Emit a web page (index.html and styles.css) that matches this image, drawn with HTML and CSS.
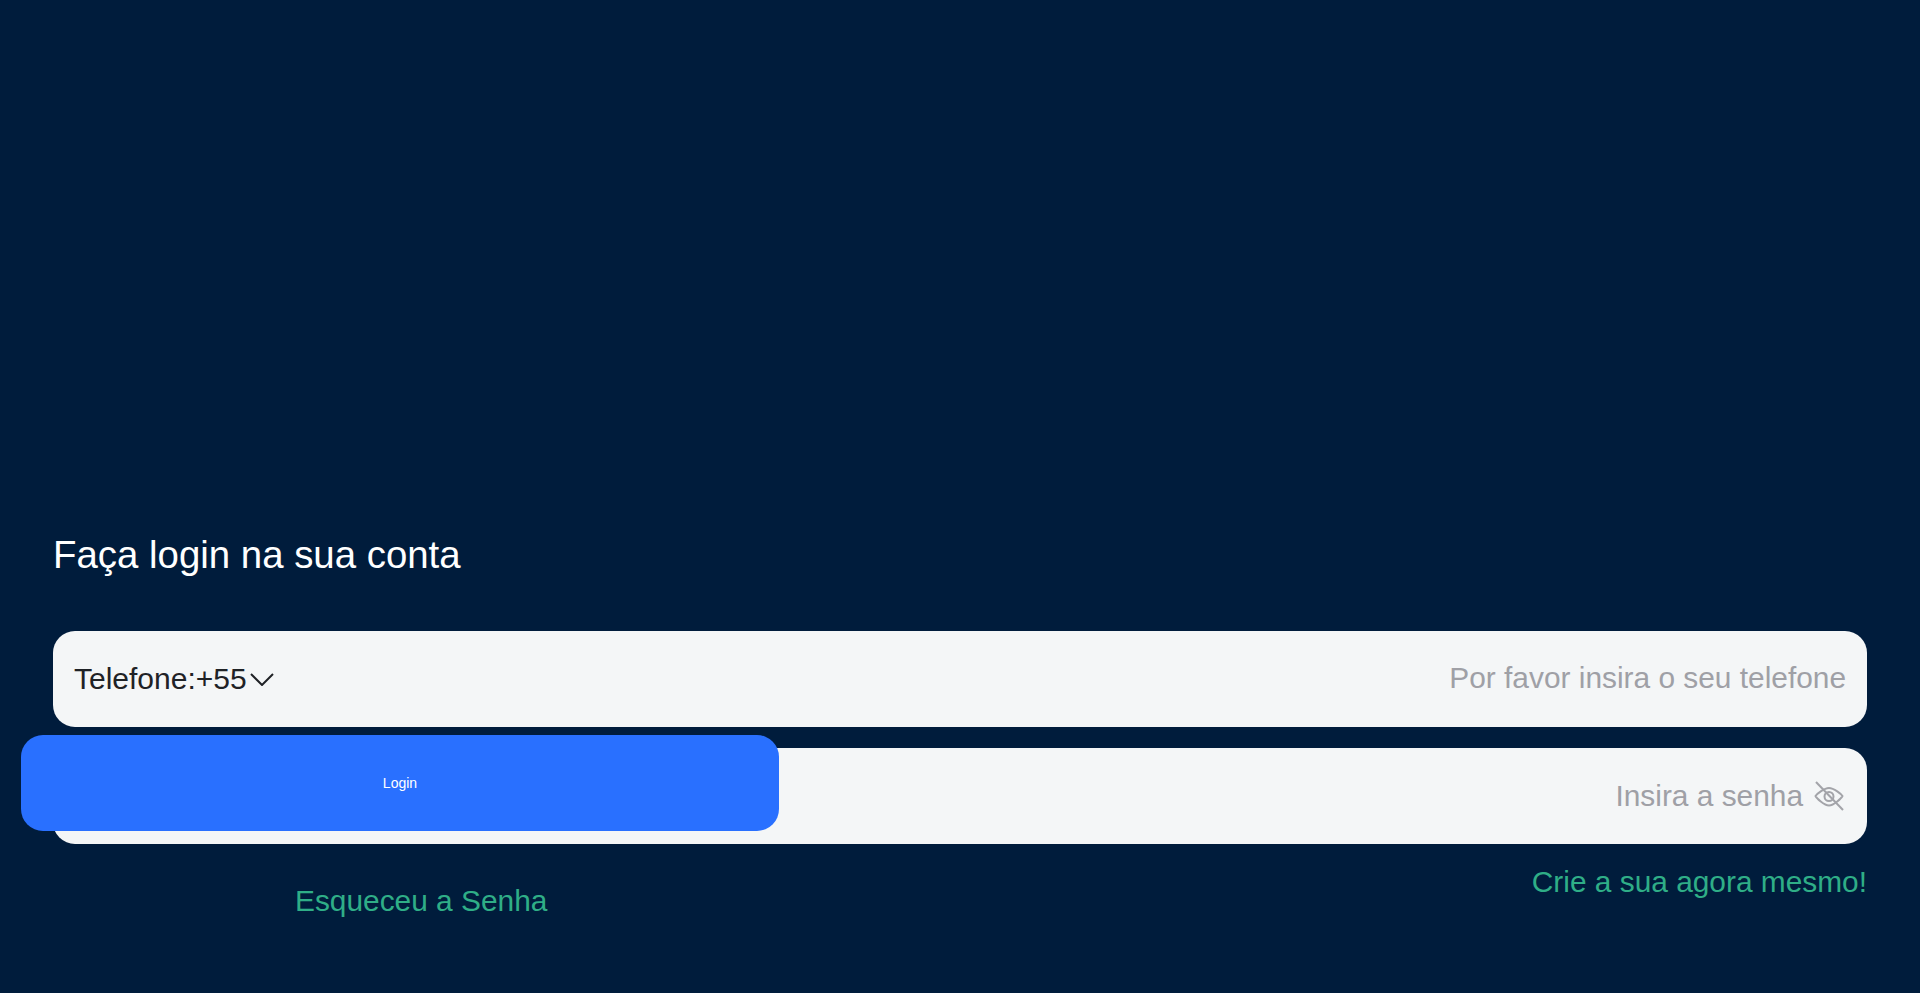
FILE: index.html
```html
<!DOCTYPE html>
<html lang="pt">
<head>
<meta charset="utf-8">
<title>Login</title>
<link rel="stylesheet" href="styles.css">
</head>
<body>
<main class="page">
  <h1 class="title">Faça login na sua conta</h1>
  <form class="form">
    <div class="field">
      <div class="prefix">
        <span>Telefone:+55</span>
        <svg class="chevron" viewBox="0 0 24 13" fill="none" stroke="currentColor" stroke-width="2"><path d="M1 1l11 11L23 1"/></svg>
      </div>
      <span class="placeholder raised">Por favor insira o seu telefone</span>
    </div>
    <div class="field">
      <span class="placeholder grow">Insira a senha</span>
      <svg class="eye" viewBox="0 0 30 30" fill="none" stroke="currentColor" stroke-width="2" stroke-linejoin="round"><path d="M1.500 15C2.500 13.500 10 7 15 7s12.500 6.500 13.500 8C27.500 17 20 24.500 15 24.500S2.500 17 1.500 15z"/><circle cx="15" cy="15.500" r="4.500"/><path d="M2 1l27 28"/></svg>
    </div>
    <button class="login" type="button">Login</button>
    <div class="links">
      <a class="link forgot">Esqueceu a Senha</a>
      <a class="link create">Crie a sua agora mesmo!</a>
    </div>
  </form>
</main>
</body>
</html>
```
FILE: styles.css
```css
* { box-sizing: border-box; }
html, body { margin: 0; height: 100%; }
body {
  background: #001c3c;
  font-family: "Liberation Sans", Arial, sans-serif;
  overflow: hidden;
}
.page {
  height: 993px;
  padding: 531px 53px 0;
}
.title {
  margin: 0 0 52px;
  font-size: 38.4px;
  font-weight: 400;
  line-height: 48px;
  color: #fff;
}
.form { position: relative; }
.field {
  display: flex;
  align-items: center;
  justify-content: space-between;
  height: 96px;
  margin-bottom: 21px;
  padding: 0 21px;
  background: #f4f6f7;
  border-radius: 22px;
  font-size: 29.87px;
}
.prefix {
  display: flex;
  align-items: center;
  font-size: 30px;
  color: #1f2226;
}
.chevron { width: 24px; height: 13px; color: #1f2226; margin-left: 3px; }
.placeholder { color: #9fa0a6; }
.raised { margin-bottom: 2px; }
.grow { flex: 1; text-align: right; }
.eye { width: 30px; height: 30px; margin: 0 2px 0 11px; color: #a3a4a9; }
.login {
  position: absolute;
  left: -32px;
  top: 104px;
  width: 758px;
  height: 96px;
  border: 0;
  border-radius: 22px;
  background: #2970ff;
  color: #fff;
  font: 14px "Liberation Sans", Arial, sans-serif;
}
.links { position: relative; height: 70px; }
.link {
  position: absolute;
  font-size: 29.87px;
  line-height: 38px;
  color: #2fae87;
}
.forgot { left: 242px; top: 17px; }
.create { right: 0; top: -2px; }
```
